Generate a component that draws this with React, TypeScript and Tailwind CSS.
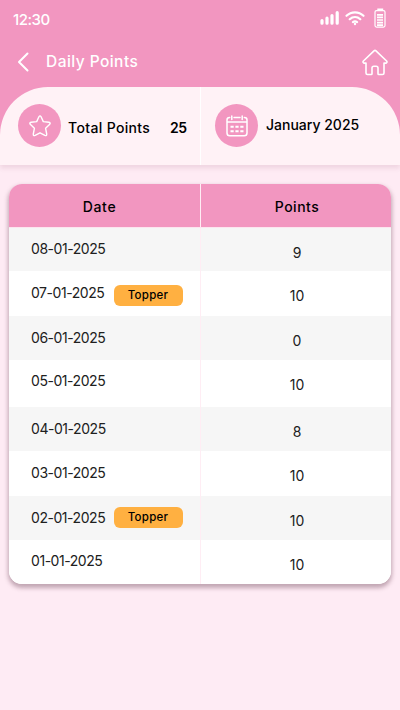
import React from "react";

type Row = {
  date: string;
  points: number;
  height: string;
  offset: string;
  badge?: string;
};

const rows: Row[] = [
  { date: "08-01-2025", points: 9, height: "h-[43px]", offset: "mt-[11px]" },
  { date: "07-01-2025", points: 10, height: "h-[45px]", offset: "mt-[12px]", badge: "mt-[14px]" },
  { date: "06-01-2025", points: 0, height: "h-[44px]", offset: "mt-[12px]" },
  { date: "05-01-2025", points: 10, height: "h-[47px]", offset: "mt-[11px]" },
  { date: "04-01-2025", points: 8, height: "h-[44px]", offset: "mt-[12px]" },
  { date: "03-01-2025", points: 10, height: "h-[45px]", offset: "mt-[12px]" },
  { date: "02-01-2025", points: 10, height: "h-[44px]", offset: "mt-[12px]", badge: "mt-[11px]" },
  { date: "01-01-2025", points: 10, height: "h-[44px]", offset: "mt-[11px]" },
];

function StatusBar() {
  return (
    <div className="flex h-10 items-start">
      <span className="ml-[13px] mt-[10px] w-[60px] text-[15px] leading-5 font-medium tracking-[-0.5px]">12:30</span>
      <svg className="ml-auto mr-[14px] mt-[8px]" width="66" height="20" viewBox="0 0 66 20" fill="none" stroke="white">
        <g strokeWidth="3.2" strokeLinecap="round">
          <path d="M2 15.2v-2.700M7 15.2v-5M12 15.2V7.500M17.200 15.2V4.7" />
        </g>
        <g strokeWidth="2.2" strokeLinecap="round">
          <path d="M26.500 7.8c4.8-4.700 12.200-4.700 17 0" />
          <path d="M29.700 11.200c3.100-2.900 7.500-2.900 10.600 0" />
          <path d="M32.900 14.100c1.300-1 2.900-1 4.200 0" />
        </g>
        <circle cx="35" cy="16" r="1.200" fill="white" stroke="none" />
        <path d="M58 2.500V1.200h4.500v1.300" strokeWidth="1.400" />
        <rect x="55" y="2.600" width="10" height="16.500" rx="1.500" strokeWidth="1.200" />
        <path d="M57 6.800h6M57 9.400h6M57 12h6M57 14.600h6M57 17.100h6" strokeWidth="1.700" />
      </svg>
    </div>
  );
}

function TitleBar() {
  return (
    <div className="flex h-[47px] items-start">
      <svg className="ml-[17px] mt-[12px]" width="13" height="20" viewBox="0 0 13 20" fill="none" stroke="white" strokeWidth="2" strokeLinecap="round" strokeLinejoin="round">
        <path d="M10.500 1.500L2 10l8.500 8.500" />
      </svg>
      <h1 className="ml-[16px] mt-[12px] text-[15.5px] leading-5 font-medium tracking-[0.45px]">Daily Points</h1>
      <svg className="ml-auto mr-[12px] mt-[9px]" width="26" height="27" viewBox="0 0 26 27" fill="none" stroke="white" strokeWidth="1.600" strokeLinecap="round" strokeLinejoin="round">
        <path d="M12 1.800q1-.9 2 0L24.600 12q1 1.300-.4 2.100H22V24q0 1.500-1.500 1.500h-3.800q-.7 0-.7-.7V19q0-1.800-1.800-1.800h-2.400Q10 17.200 10 19v5.800q0 .7-.7.700H5.500Q4 25.500 4 24v-9.900H1.800Q.4 13.300 1.400 12Z" />
      </svg>
    </div>
  );
}

function StarIcon() {
  return (
    <svg width="24" height="24" viewBox="0 0 24 24" fill="none" stroke="white" strokeWidth="1.400" strokeLinejoin="round">
      <path d="M10.900 2.800Q12 1 13.100 2.800L15.300 7.600L20.900 8.300Q23.100 8.800 21.500 10.500L17.600 14.300L18.700 20Q18.900 22.300 16.900 21.400L12 18.800L7.100 21.400Q5.100 22.300 5.300 20L6.400 14.300L2.500 10.500Q.9 8.800 3.100 8.300L8.700 7.600Z" />
    </svg>
  );
}

function CalendarIcon() {
  return (
    <svg width="22" height="22" viewBox="0 0 22 22" fill="none" stroke="white" strokeWidth="1.500" strokeLinecap="round" strokeLinejoin="round">
      <path d="M3.700 2.500H3.500Q1 2.500 1 5v13q0 2.800 2.800 2.800h14.400Q21 20.800 21 18V5q0-2.500-2.500-2.500H18.300M8 2.500h6M1 7h20M5.800 1v3.500M16.200 1v3.500" />
      <path d="M4.500 11.700h3.200M9.400 11.700h3.200M14.300 11.700h3.200M4.500 16.200h3.200M9.400 16.200h3.200M14.300 16.200h3.200" strokeWidth="2" strokeLinecap="butt" />
    </svg>
  );
}

function Summary() {
  return (
    <section className="flex h-[78px] overflow-hidden rounded-t-[48px] bg-[#fff2f6] text-black">
      <div className="flex w-[201px] items-start border-r border-white">
        <div className="ml-[18px] mt-[17px] flex size-[43px] shrink-0 items-center justify-center rounded-full bg-[#f296c0]">
          <StarIcon />
        </div>
        <span className="ml-[7px] mt-[31px] w-[102px] whitespace-nowrap text-sm leading-5 font-medium tracking-[0.35px]">Total Points</span>
        <span className="mt-[31px] text-sm leading-5 font-semibold tracking-[-0.5px]">25</span>
      </div>
      <div className="flex items-start">
        <div className="ml-[14px] mt-[17px] flex size-[43px] shrink-0 items-center justify-center rounded-full bg-[#f296c0]">
          <CalendarIcon />
        </div>
        <span className="ml-[8px] mt-[28px] whitespace-nowrap text-sm leading-5 font-medium">January 2025</span>
      </div>
    </section>
  );
}

function PointsTable() {
  return (
    <section className="mx-[9px] mt-[19px] overflow-hidden rounded-[13px] bg-white shadow-[0_3px_4px_1px_rgba(80,35,55,0.34)]">
      <div className="flex h-[44px] border-b border-[#fce5ef] bg-[#f296c0] text-sm font-medium text-black">
        <div className="flex w-[192px] items-center justify-center border-r border-[#ffedf4] pr-[10px] pt-[2px] tracking-[0.7px]">Date</div>
        <div className="flex flex-1 items-center justify-center pl-[2px] pt-[2px] tracking-[0.5px]">Points</div>
      </div>
      {rows.map((row) => (
        <div key={row.date} className={`flex text-[#202020] odd:bg-white even:bg-[#f6f6f6] ${row.height}`}>
          <div className="flex w-[192px] items-start border-r border-[#ffedf4]">
            <span className={`ml-[22px] w-[83px] whitespace-nowrap text-sm leading-5 tracking-[-0.45px] ${row.offset}`}>{row.date}</span>
            {row.badge && (
              <span className={`flex h-[21px] w-[69px] items-center justify-center rounded-[6px] bg-[#ffb041] pt-px pr-px text-[11.5px] font-medium tracking-[0.25px] text-black ${row.badge}`}>Topper</span>
            )}
          </div>
          <div className="flex-1 pt-[15px] pl-[2px] text-center text-sm leading-5">{row.points}</div>
        </div>
      ))}
    </section>
  );
}

export default function App() {
  return (
    <main className="h-[710px] w-[400px] overflow-hidden bg-[#feebf4] font-['Inter',sans-serif]">
      <div className="h-[165px] bg-[#f296c0] text-white shadow-[0_3px_5px_rgba(120,40,75,0.12)]">
        <StatusBar />
        <TitleBar />
        <Summary />
      </div>
      <PointsTable />
    </main>
  );
}
